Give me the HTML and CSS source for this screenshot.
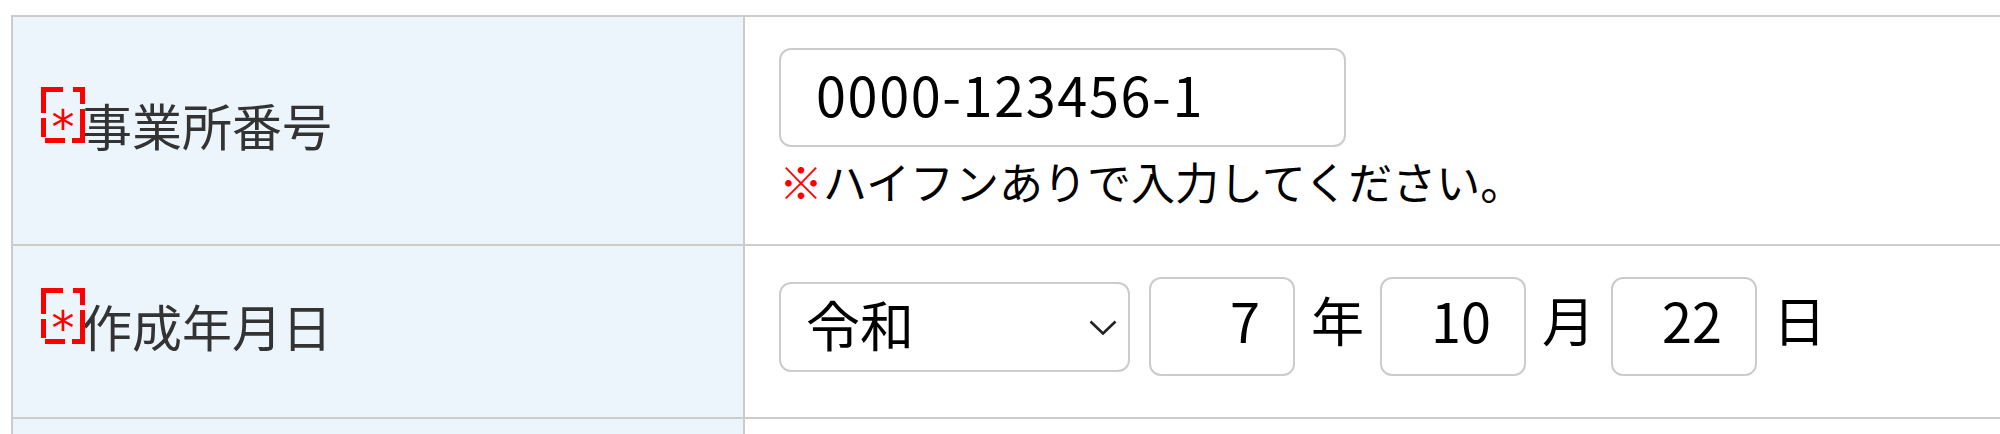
FILE: index.html
```html
<!DOCTYPE html>
<html lang="ja">
<head>
<meta charset="utf-8">
<title>フォーム</title>
<link rel="stylesheet" href="styles.css">
</head>
<body>
<div class="form">
  <div class="label">
    <span class="req"><svg class="req-frame" viewBox="0 0 44 56" width="44" height="56"><g stroke="#ff0000" stroke-width="5" fill="none"><line x1="0" y1="2.5" x2="44" y2="2.5" stroke-dasharray="22 10 12"/><line x1="0" y1="53.5" x2="44" y2="53.5" stroke-dasharray="0 4 20 7 13"/><line x1="2.5" y1="0" x2="2.5" y2="56" stroke-dasharray="26 5 19 6"/><line x1="41.5" y1="0" x2="41.5" y2="56" stroke-dasharray="17 5 34"/></g></svg>*</span><span class="label-text">事業所番号</span>
  </div>
  <div class="value value-office">
    <input class="field office" type="text" value="0000-123456-1">
    <p class="note"><span class="kome">※</span>ハイフンありで入力してください。</p>
  </div>

  <div class="label">
    <span class="req"><svg class="req-frame" viewBox="0 0 44 56" width="44" height="56"><g stroke="#ff0000" stroke-width="5" fill="none"><line x1="0" y1="2.5" x2="44" y2="2.5" stroke-dasharray="22 10 12"/><line x1="0" y1="53.5" x2="44" y2="53.5" stroke-dasharray="0 4 20 7 13"/><line x1="2.5" y1="0" x2="2.5" y2="56" stroke-dasharray="26 5 19 6"/><line x1="41.5" y1="0" x2="41.5" y2="56" stroke-dasharray="17 5 34"/></g></svg>*</span><span class="label-text">作成年月日</span>
  </div>
  <div class="value value-date">
    <span class="select-wrap">
      <select class="field era"><option>令和</option></select>
      <svg class="chev" viewBox="0 0 28 15" width="28" height="15"><polyline points="1.5,1.5 14,13.5 26.5,1.5" fill="none" stroke="#222" stroke-width="2.6"/></svg>
    </span>
    <input class="field num" type="text" value="7">
    <span class="unit">年</span>
    <input class="field num" type="text" value="10">
    <span class="unit">月</span>
    <input class="field num" type="text" value="22">
    <span class="unit">日</span>
  </div>

  <div class="label"></div>
  <div class="value"></div>
</div>
</body>
</html>
```
FILE: styles.css
```css
* {
  box-sizing: border-box;
}

html,
body {
  margin: 0;
  background: #fff;
  overflow: hidden;
}

body {
  font-family: "Noto Sans CJK JP", "Noto Sans", sans-serif;
  color: #000;
}

.form {
  display: grid;
  grid-template-columns: 732px 1300px;
  grid-template-rows: 229px 173px 100px;
  margin: 15px 0 0 11px;
  border-top: 2px solid #ccc;
  border-left: 2px solid #ccc;
}

.label {
  background: #edf5fc;
  border-right: 2px solid #ccc;
  border-bottom: 2px solid #ccc;
  display: flex;
  align-items: center;
  padding: 0 0 13px 28px;
  color: #333;
}

.req {
  position: relative;
  display: inline-flex;
  justify-content: center;
  align-items: center;
  width: 44px;
  height: 56px;
  color: #ff0000;
  font-family: "DejaVu Sans", sans-serif;
  font-weight: 400;
  font-size: 46px;
  line-height: 1;
  padding-top: 24px;
  margin-bottom: 19px;
}

.req-frame {
  position: absolute;
  left: 0;
  top: 0;
}

.label-text {
  font-size: 50px;
  line-height: 60px;
  margin-left: -3px;
}

.value {
  border-bottom: 2px solid #ccc;
  padding-left: 34px;
}

.value-office {
  display: flex;
  flex-direction: column;
  align-items: flex-start;
  padding-top: 31px;
}

.field {
  font-family: inherit;
  font-size: 54px;
  color: #000;
  background: #fff;
  border: 2px solid #ccc;
  border-radius: 12px;
  outline: none;
  margin: 0;
}

.office {
  width: 567px;
  height: 99px;
  padding: 0 0 8px 35px;
  letter-spacing: 1.6px;
}

.note {
  margin: 8px 0 0;
  font-size: 44px;
  line-height: 52px;
  color: #000;
}

.kome {
  color: #ff0000;
}

.value-date {
  display: flex;
  align-items: center;
  gap: 16px;
  padding-bottom: 10px;
}

.select-wrap {
  position: relative;
  display: block;
  margin-right: 3px;
}

.era {
  -webkit-appearance: none;
  appearance: none;
  display: block;
  width: 351px;
  height: 90px;
  padding: 0 0 14px 25px;
}

.chev {
  position: absolute;
  right: 13px;
  top: 38px;
  pointer-events: none;
}

.num {
  width: 146px;
  height: 99px;
  text-align: right;
  padding: 0 33px 14px 0;
}

.unit {
  font-size: 53px;
  line-height: 1;
  padding-bottom: 15px;
}
```
